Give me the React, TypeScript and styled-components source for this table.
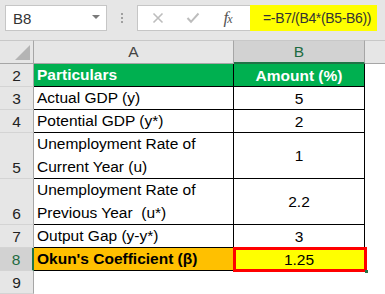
import React from "react";
import styled, { createGlobalStyle, css } from "styled-components";

const Global = createGlobalStyle`
  html, body { margin: 0; padding: 0; background: #ffffff; }
  body { font-family: "Liberation Sans", Arial, sans-serif; }
  * { box-sizing: border-box; }
`;

const Page = styled.div`
  width: 385px;
  height: 294px;
  overflow: hidden;
  background: #ffffff;
`;

const Toolbar = styled.div`
  height: 40px;
  background: #e6e6e6;
  display: flex;
  align-items: flex-start;
  padding: 5px 0 0 5px;
`;

const NameBox = styled.div`
  width: 102px;
  height: 26px;
  background: #fff;
  border: 1px solid #c6c6c6;
  display: flex;
  align-items: center;
  justify-content: space-between;
  padding: 0 6px 0 7px;
  font-size: 15px;
  color: #333;
`;

const Caret = styled.span`
  width: 0;
  height: 0;
  border-left: 4px solid transparent;
  border-right: 4px solid transparent;
  border-top: 4px solid #7a7a7a;
  margin-top: -3px;
`;

const Dots = styled.div`
  width: 30px;
  height: 26px;
  display: flex;
  flex-direction: column;
  align-items: center;
  justify-content: center;
  gap: 2px;
  span {
    width: 2px;
    height: 2px;
    background: #a0a0a0;
  }
`;

const FxBox = styled.div`
  width: 113px;
  height: 26px;
  background: #fff;
  border: 1px solid #c6c6c6;
  border-right: none;
  display: flex;
  align-items: center;
  padding-left: 2px;
`;

const FxButton = styled.span<{ $kind: "cancel" | "enter" | "fx" }>`
  width: 35px;
  display: flex;
  align-items: center;
  justify-content: center;
  ${(p) =>
    p.$kind === "fx"
      ? css`
          color: #555;
          font-family: "Liberation Serif", "Times New Roman", serif;
          font-style: italic;
          font-size: 17px;
          letter-spacing: -1px;
        `
      : css`
          color: #bdbdbd;
        `}
  sub {
    font-size: 12px;
    vertical-align: baseline;
    position: relative;
    top: 1px;
  }
`;

const FormulaInput = styled.div`
  width: 127px;
  height: 26px;
  background: #ffff00;
  display: flex;
  align-items: center;
  padding-left: 13px;
  font-size: 14px;
  letter-spacing: -0.35px;
  white-space: nowrap;
  overflow: hidden;
  color: #333;
`;

const Sheet = styled.div`
  display: grid;
  grid-template-columns: 34px 200px 131px 1fr;
  grid-template-rows: 24px 23px 23px 23px 46px 46px 23px 23px 23px;
`;

const headerBase = css`
  background: #e6e6e6;
  font-size: 15.5px;
  color: #222;
  display: flex;
  justify-content: center;
`;

const Corner = styled.div`
  ${headerBase};
  position: relative;
  border-top: 1px solid #c8c8c8;
  border-right: 1px solid #a6a6a6;
  border-bottom: 1px solid #a6a6a6;
  &::after {
    content: "";
    position: absolute;
    right: 3px;
    bottom: 3px;
    width: 0;
    height: 0;
    border-left: 15px solid transparent;
    border-bottom: 15px solid #b4b4b4;
  }
`;

const ColHead = styled.div<{ $sel?: boolean; $filler?: boolean }>`
  ${headerBase};
  align-items: center;
  border-top: 1px solid #c8c8c8;
  border-right: 1px solid #a6a6a6;
  border-bottom: 1px solid #a6a6a6;
  color: #444;
  ${(p) =>
    p.$sel &&
    css`
      background: #d2d2d2;
      color: #1e6b41;
      border-bottom: 2px solid #217346;
    `}
  ${(p) =>
    p.$filler &&
    css`
      border-right: none;
    `}
`;

const RowHead = styled.div<{ $sel?: boolean }>`
  ${headerBase};
  align-items: flex-end;
  padding-bottom: 1px;
  border-right: 1px solid #a6a6a6;
  border-bottom: 1px solid #d4d4d4;
  ${(p) =>
    p.$sel &&
    css`
      background: #d2d2d2;
      color: #1e6b41;
      border-right: 2px solid #217346;
    `}
`;

type Tone = "plain" | "green" | "orange" | "yellow";

const tones: Record<Tone, string> = {
  plain: "#ffffff",
  green: "#00b050",
  orange: "#ffc000",
  yellow: "#ffff00",
};

const Cell = styled.div<{ $tone?: Tone; $center?: boolean; $bold?: boolean }>`
  position: relative;
  background: ${(p) => tones[p.$tone || "plain"]};
  border-right: 1px solid #000;
  border-bottom: 1px solid #000;
  font-size: 15.5px;
  line-height: 23px;
  color: ${(p) => (p.$tone === "green" ? "#fff" : "#000")};
  font-weight: ${(p) => (p.$bold ? 700 : 400)};
  display: flex;
  align-items: ${(p) => (p.$center ? "center" : "flex-end")};
  justify-content: ${(p) => (p.$center ? "center" : "flex-start")};
  padding: 0 3px;
  white-space: nowrap;
`;

const Wrapped = styled.span`
  white-space: normal;
  display: block;
`;

const Blank = styled.div`
  background: #fff;
`;

const Selection = styled.div`
  position: absolute;
  left: -1px;
  top: -1px;
  width: 134px;
  height: 25px;
  border: 3px solid #ff0000;
  pointer-events: none;
  &::after {
    content: "";
    position: absolute;
    right: -4px;
    bottom: -4px;
    width: 3px;
    height: 3px;
    background: #217346;
  }
`;

type Row = {
  n: number;
  a: string[];
  b: string;
  kind?: "head" | "result";
};

const rows: Row[] = [
  { n: 2, a: ["Particulars"], b: "Amount (%)", kind: "head" },
  { n: 3, a: ["Actual GDP (y)"], b: "5" },
  { n: 4, a: ["Potential GDP (y*)"], b: "2" },
  { n: 5, a: ["Unemployment Rate of", "Current Year (u)"], b: "1" },
  { n: 6, a: ["Unemployment Rate of", "Previous Year\u00a0 (u*)"], b: "2.2" },
  { n: 7, a: ["Output Gap (y-y*)"], b: "3" },
  { n: 8, a: ["Okun's Coefficient (\u03b2)"], b: "1.25", kind: "result" },
];

function CancelIcon() {
  return (
    <svg width="12" height="12" viewBox="0 0 12 12">
      <path d="M1.5 1.5 L10.5 10.5 M10.5 1.5 L1.5 10.5" stroke="#bdbdbd" strokeWidth="1.6" fill="none" />
    </svg>
  );
}

function EnterIcon() {
  return (
    <svg width="14" height="12" viewBox="0 0 14 12">
      <path d="M1.5 6 L5 9.8 L12.5 1.5" stroke="#bdbdbd" strokeWidth="2" fill="none" />
    </svg>
  );
}

export default function App() {
  return (
    <Page>
      <Global />
      <Toolbar>
        <NameBox>
          <span>B8</span>
          <Caret />
        </NameBox>
        <Dots>
          <span />
          <span />
          <span />
        </Dots>
        <FxBox>
          <FxButton $kind="cancel">
            <CancelIcon />
          </FxButton>
          <FxButton $kind="enter">
            <EnterIcon />
          </FxButton>
          <FxButton $kind="fx">
            f<sub>x</sub>
          </FxButton>
        </FxBox>
        <FormulaInput>=-B7/(B4*(B5-B6))</FormulaInput>
      </Toolbar>
      <Sheet>
        <Corner />
        <ColHead>A</ColHead>
        <ColHead $sel>B</ColHead>
        <ColHead $filler />
        {rows.map((r) => {
          const aTone: Tone = r.kind === "head" ? "green" : r.kind === "result" ? "orange" : "plain";
          const bTone: Tone = r.kind === "head" ? "green" : r.kind === "result" ? "yellow" : "plain";
          const bold = r.kind === "head" || r.kind === "result";
          return (
            <React.Fragment key={r.n}>
              <RowHead $sel={r.kind === "result"}>{r.n}</RowHead>
              <Cell $tone={aTone} $bold={bold}>
                {r.a.length > 1 ? (
                  <Wrapped>
                    {r.a.map((l) => (
                      <div key={l}>{l}</div>
                    ))}
                  </Wrapped>
                ) : (
                  r.a[0]
                )}
              </Cell>
              <Cell $tone={bTone} $center $bold={r.kind === "head"}>
                {r.b}
                {r.kind === "result" && <Selection />}
              </Cell>
              <Blank />
            </React.Fragment>
          );
        })}
        <RowHead>9</RowHead>
        <Blank />
        <Blank />
        <Blank />
      </Sheet>
    </Page>
  );
}
